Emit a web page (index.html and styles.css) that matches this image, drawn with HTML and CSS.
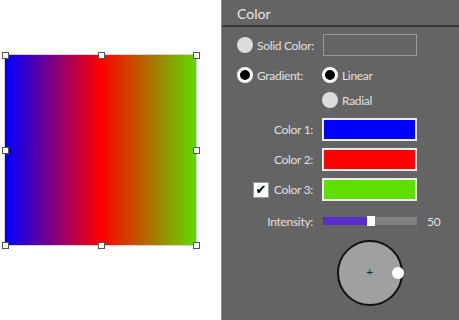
FILE: index.html
```html
<!DOCTYPE html>
<html lang="en">
<head>
    <meta charset="UTF-8">
    <title>Color</title>
    <link rel="stylesheet" href="styles.css">
</head>
<body>
    <div class="stage">
        <!-- canvas with selected shape -->
        <div class="canvas">
            <div class="shape">
                <span class="handle tl"></span>
                <span class="handle tc"></span>
                <span class="handle tr"></span>
                <span class="handle ml"></span>
                <span class="handle mr"></span>
                <span class="handle bl"></span>
                <span class="handle bc"></span>
                <span class="handle br"></span>
            </div>
        </div>

        <!-- properties panel -->
        <div class="panel">
            <div class="panel-title">Color</div>
            <div class="panel-body">
                <div class="row row-solid">
                    <div class="opt"><span class="radio"></span>Solid Color:</div>
                    <div class="textbox"></div>
                </div>
                <div class="row row-grad">
                    <div class="opt"><span class="radio on"></span>Gradient:</div>
                    <div class="opt"><span class="radio on"></span>Linear</div>
                </div>
                <div class="row row-radial">
                    <div></div>
                    <div class="opt"><span class="radio"></span>Radial</div>
                </div>
                <div class="row row-color">
                    <div class="label">Color 1:</div>
                    <div class="swatch blue"></div>
                </div>
                <div class="row row-color">
                    <div class="label">Color 2:</div>
                    <div class="swatch red"></div>
                </div>
                <div class="row row-color">
                    <div class="label"><span class="check">&#10004;</span>Color 3:</div>
                    <div class="swatch green"></div>
                </div>
                <div class="row row-intensity">
                    <div class="label">Intensity:</div>
                    <div class="slider">
                        <div class="fill" style="width: 47%"></div>
                        <div class="thumb"></div>
                    </div>
                    <div class="value">50</div>
                </div>
                <div class="row row-dial">
                    <div></div>
                    <div class="dial">
                        <span class="cross">+</span>
                        <span class="knob"></span>
                    </div>
                </div>
            </div>
        </div>
    </div>
</body>
</html>
```

FILE: styles.css
```css
*{
    margin: 0;
    padding: 0;
    box-sizing: border-box;
}
body{
    background: #fff;
    font-family: Lato, "Open Sans", sans-serif;
    font-size: 12px;
    letter-spacing: -0.3px;
    color: #e0e0e0;
}
.stage{
    display: flex;
    width: 459px;
    height: 320px;
}

/* canvas */
.canvas{
    width: 221px;
    padding: 55px 0 0 5px;
}
.shape{
    position: relative;
    width: 191px;
    height: 190px;
    background: linear-gradient(to right, #0000ff 0%, #ff0000 50%, #5fdc00 100%);
    box-shadow: 0 0 0 1px rgba(180, 180, 200, 0.6);
}
.handle{
    position: absolute;
    width: 7px;
    height: 7px;
    margin: -3px 0 0 -3px;
    background: #fff;
    border: 1px solid #555;
}
.tl{ left: 0; top: 0; }
.tc{ left: 50%; top: 0; }
.tr{ left: 100%; top: 0; }
.ml{ left: 0; top: 50%; }
.mr{ left: 100%; top: 50%; }
.bl{ left: 0; top: 100%; }
.bc{ left: 50%; top: 100%; }
.br{ left: 100%; top: 100%; }

/* panel */
.panel{
    flex: 1;
    background: #646464;
    border-left: 1px solid #8c8c8c;
}
.panel-title{
    height: 27px;
    padding: 5px 0 0 15px;
    font-size: 14px;
    letter-spacing: 0;
    color: #e8e8e8;
    border-bottom: 2px solid #3a3a3a;
}
.panel-body{
    padding: 7px 0 0 15px;
}
.row{
    display: grid;
    grid-template-columns: 76px 95px auto;
    column-gap: 9px;
    align-items: center;
}
.row-solid{ height: 22px; }
.row-grad{ height: 18px; margin-top: 10px; }
.row-radial{ height: 18px; margin-top: 7px; }
.row-color{ height: 23px; margin-top: 7px; }
.row-radial + .row-color{ margin-top: 9px; }
.row-intensity{ height: 18px; margin-top: 11px; }
.row-dial{ margin-top: 10px; }

.opt{
    display: flex;
    align-items: center;
    gap: 4px;
    white-space: nowrap;
}
.radio{
    flex-shrink: 0;
    width: 16px;
    height: 16px;
    border-radius: 50%;
    background: #dcdcdc;
}
.radio.on{
    background: #000;
    border: 3px solid #fff;
}
.textbox{
    height: 22px;
    border: 1px solid #9a9a9a;
    margin-left: 1px;
}
.label{
    display: flex;
    align-items: center;
    justify-content: flex-end;
    gap: 5px;
    white-space: nowrap;
}
.check{
    flex-shrink: 0;
    width: 16px;
    height: 16px;
    background: #fff;
    border: 1px solid #999;
    color: #000;
    font-size: 13px;
    font-weight: bold;
    line-height: 14px;
    letter-spacing: 0;
    text-align: center;
    font-family: "DejaVu Sans", sans-serif;
}
.swatch{
    height: 23px;
    border: 2px solid #eeeeee;
}
.blue{ background: #0000ff; }
.red{ background: #ff0000; }
.green{ background: #5fe000; }

.slider{
    position: relative;
    height: 8px;
    margin-left: 1px;
    background: #808080;
}
.fill{
    height: 100%;
    background: #5a2dcb;
}
.thumb{
    position: absolute;
    left: 47%;
    top: -1px;
    width: 8px;
    height: 10px;
    background: #fff;
}
.value{
    padding-left: 1px;
}

.dial{
    position: relative;
    justify-self: center;
    width: 66px;
    height: 66px;
    border-radius: 50%;
    background: #a0a0a0;
    border: 2px solid #111;
}
.cross{
    position: absolute;
    left: 0;
    right: 0;
    top: 23px;
    text-align: center;
    color: #222;
    font-size: 12px;
    line-height: 14px;
}
.knob{
    position: absolute;
    right: -3px;
    top: 25px;
    width: 12px;
    height: 12px;
    border-radius: 50%;
    background: #fff;
}
```
